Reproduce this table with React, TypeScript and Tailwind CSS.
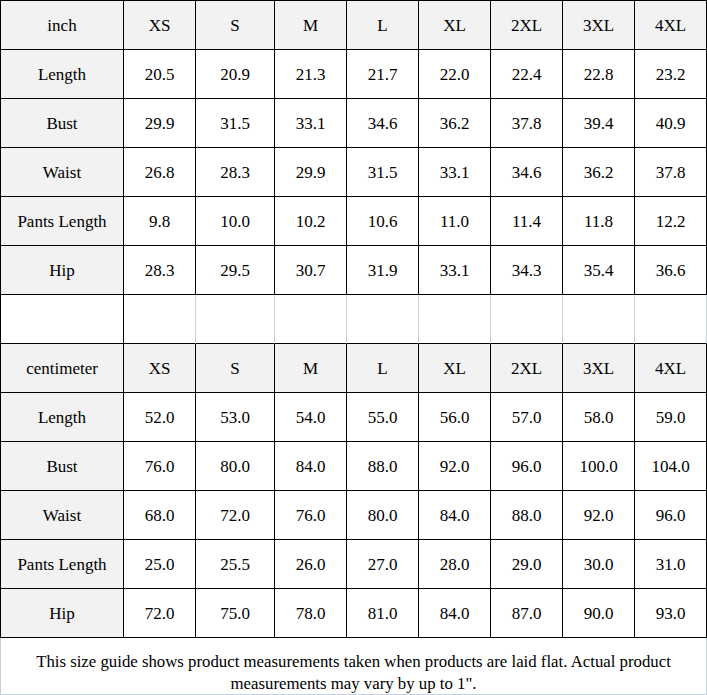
import React from 'react';

const sizes = ['XS', 'S', 'M', 'L', 'XL', '2XL', '3XL', '4XL'];

const inchRows: [string, string[]][] = [
  ['Length', ['20.5', '20.9', '21.3', '21.7', '22.0', '22.4', '22.8', '23.2']],
  ['Bust', ['29.9', '31.5', '33.1', '34.6', '36.2', '37.8', '39.4', '40.9']],
  ['Waist', ['26.8', '28.3', '29.9', '31.5', '33.1', '34.6', '36.2', '37.8']],
  ['Pants Length', ['9.8', '10.0', '10.2', '10.6', '11.0', '11.4', '11.8', '12.2']],
  ['Hip', ['28.3', '29.5', '30.7', '31.9', '33.1', '34.3', '35.4', '36.6']],
];

const cmRows: [string, string[]][] = [
  ['Length', ['52.0', '53.0', '54.0', '55.0', '56.0', '57.0', '58.0', '59.0']],
  ['Bust', ['76.0', '80.0', '84.0', '88.0', '92.0', '96.0', '100.0', '104.0']],
  ['Waist', ['68.0', '72.0', '76.0', '80.0', '84.0', '88.0', '92.0', '96.0']],
  ['Pants Length', ['25.0', '25.5', '26.0', '27.0', '28.0', '29.0', '30.0', '31.0']],
  ['Hip', ['72.0', '75.0', '78.0', '81.0', '84.0', '87.0', '90.0', '93.0']],
];

const Cell = ({ children, first, shaded }: { children?: React.ReactNode; first?: boolean; shaded?: boolean }) => (
  <div
    className={`flex items-center justify-center h-[49px] pt-[2px] border-r border-b border-black ${first ? 'border-l' : ''} ${
      shaded ? 'bg-[#f2f2f2]' : 'bg-white'
    }`}
  >
    {children}
  </div>
);

const Section = ({ unit, rows }: { unit: string; rows: [string, string[]][] }) => (
  <>
    <Cell first shaded>{unit}</Cell>
    {sizes.map((s) => (
      <Cell key={s} shaded>{s}</Cell>
    ))}
    {rows.map(([label, vals]) => (
      <React.Fragment key={label}>
        <Cell first shaded>{label}</Cell>
        {vals.map((v, i) => (
          <Cell key={i}>{v}</Cell>
        ))}
      </React.Fragment>
    ))}
  </>
);

export default function App() {
  return (
    <div className="w-[707px] h-[695px] bg-white text-black text-[17px] font-['Liberation_Serif','Times_New_Roman',serif]">
      <div className="grid grid-cols-[124px_72px_79px_repeat(6,72px)]">
        {/* top rule */}
        <div className="col-span-9 h-px bg-black" />

        <Section unit="inch" rows={inchRows} />

        {/* spacer row */}
        <div className="h-[49px] border-l border-r border-b border-black bg-white" />
        {sizes.map((s) => (
          <div key={s} className="h-[49px] border-b border-r border-b-black border-r-[#c8cfe0] bg-white" />
        ))}

        <Section unit="centimeter" rows={cmRows} />

        {/* note */}
        <div className="col-span-9 h-[57px] border-l border-r border-b border-[#c8cfe0] pt-[13px] px-6 text-center text-[16.8px] leading-[22px]">
          This size guide shows product measurements taken when products are laid flat. Actual product measurements may vary by up to 1".
        </div>
      </div>
    </div>
  );
}
